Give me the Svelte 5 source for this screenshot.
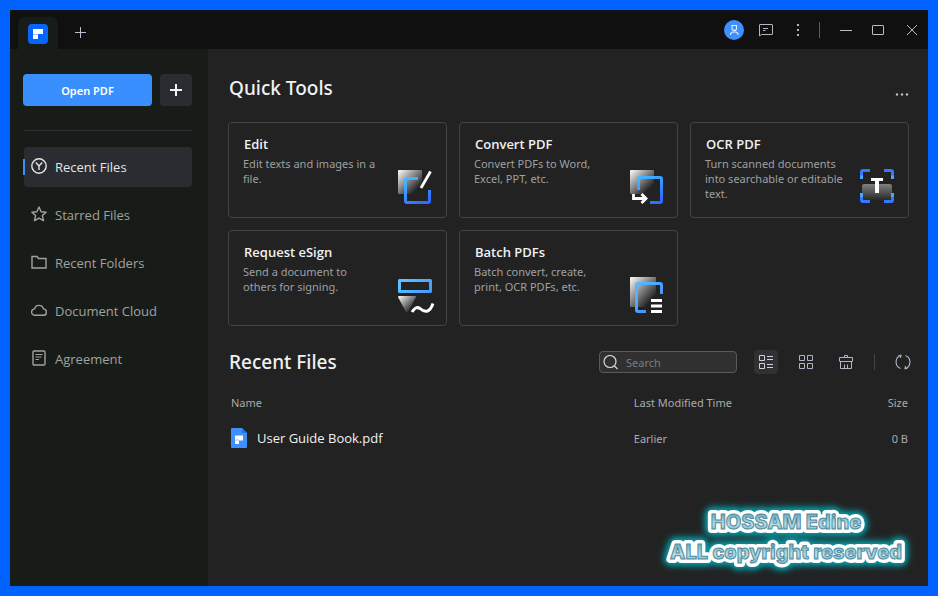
<script>
  let search = $state('');
  let activeNav = $state('Recent Files');
  let view = $state('list');

  const navItems = [
    { label: 'Recent Files', icon: 'clock' },
    { label: 'Starred Files', icon: 'star' },
    { label: 'Recent Folders', icon: 'folder' },
    { label: 'Document Cloud', icon: 'cloud' },
    { label: 'Agreement', icon: 'doc' }
  ];

  const tools = [
    { id: 'edit', title: 'Edit', text: 'Edit texts and images in a file.' },
    { id: 'convert', title: 'Convert PDF', text: 'Convert PDFs to Word, Excel, PPT, etc.' },
    { id: 'ocr', title: 'OCR PDF', text: 'Turn scanned documents into searchable or editable text.' },
    { id: 'sign', title: 'Request eSign', text: 'Send a document to others for signing.' },
    { id: 'batch', title: 'Batch PDFs', text: 'Batch convert, create, print, OCR PDFs, etc.' }
  ];

  const files = [{ name: 'User Guide Book.pdf', modified: 'Earlier', size: '0 B' }];

  let shownFiles = $derived(
    files.filter((f) => f.name.toLowerCase().includes(search.toLowerCase()))
  );
</script>

<div class="window">
  <!-- shared gradients -->
  <svg class="defs" width="0" height="0" aria-hidden="true">
    <defs>
      <linearGradient id="fade" x1="0" y1="0" x2="1" y2="1">
        <stop offset="0" stop-color="#fff" />
        <stop offset="0.8" stop-color="#222" />
      </linearGradient>
      <linearGradient id="fadeDown" x1="0" y1="0" x2="0" y2="1">
        <stop offset="0" stop-color="#808080" />
        <stop offset="1" stop-color="#222" />
      </linearGradient>
      <linearGradient id="blue" gradientUnits="userSpaceOnUse" x1="8" y1="6" x2="24" y2="36">
        <stop offset="0.1" stop-color="#43bdff" />
        <stop offset="1" stop-color="#2f6bff" />
      </linearGradient>
      <linearGradient id="sky" gradientUnits="userSpaceOnUse" x1="0" y1="2" x2="36" y2="38">
        <stop offset="0" stop-color="#5fcaff" />
        <stop offset="0.7" stop-color="#4596ff" />
      </linearGradient>
    </defs>
  </svg>

  <header class="titlebar">
    <button class="tab" aria-label="Home">
      <svg width="20" height="20" viewBox="0 0 20 20">
        <rect width="20" height="20" rx="4" fill="#0864ff" />
        <path d="M5 5h10v5h-5v5H5z" fill="#fff" />
        <path d="M5 10h5v1H5z" fill="#9cc3ff" />
      </svg>
    </button>
    <button class="new-tab" aria-label="New tab">
      <svg width="12" height="12" viewBox="0 0 12 12"><path d="M0 6.500h11M5.500 1v11" stroke="#b6bfcc" /></svg>
    </button>

    <div class="window-controls">
      <button aria-label="Account">
        <svg width="20" height="20" viewBox="0 0 20 20">
          <circle cx="10" cy="10" r="10" fill="#3e8fff" />
          <g fill="none" stroke="#e6f0ff" stroke-width="1.100">
            <path d="M8 5.500h4.500v3q0 2-2.200 2T8 8.500zM6.500 15v-1.500l2-1.500h3.500l2 1.500V15" />
          </g>
        </svg>
      </button>
      <button aria-label="Messages">
        <svg width="16" height="14" viewBox="0 0 16 14" fill="none" stroke="#aeb7c4">
          <path d="M1.500 13V2q0-.5.5-.5h12q.5 0 .5.5v9q0 .5-.5.5H3.500L1.500 13M5 5.500h5M5 7.500h2.500" />
        </svg>
      </button>
      <button aria-label="More options">
        <svg width="2" height="12" viewBox="0 0 2 12" fill="#aeb7c4"><path d="M0 0h2v2H0zM0 5h2v2H0zM0 10h2v2H0z" /></svg>
      </button>
      <span class="divider"></span>
      <button aria-label="Minimize">
        <svg width="12" height="12" viewBox="0 0 12 12"><path d="M0 6.500h12" stroke="#b6bfcc" /></svg>
      </button>
      <button aria-label="Maximize">
        <svg width="12" height="10" viewBox="0 0 12 10"><rect x="0.5" y="0.5" width="11" height="9" rx="0.5" fill="none" stroke="#b6bfcc" /></svg>
      </button>
      <button class="close" aria-label="Close">
        <svg width="10" height="10" viewBox="0 0 10 10"><path d="M0 0l10 10M10 0L0 10" stroke="#b6bfcc" /></svg>
      </button>
    </div>
  </header>

  <div class="body">
    <aside class="sidebar">
      <div class="open-row">
        <button class="open-btn">Open PDF</button>
        <button class="create-btn" aria-label="Create PDF">
          <svg width="12" height="12" viewBox="0 0 12 12"><path d="M0 6h12M6 0v12" stroke="#f0f2f5" stroke-width="2" /></svg>
        </button>
      </div>

      <nav>
        {#each navItems as item}
          <button
            class="nav-item"
            class:active={activeNav === item.label}
            onclick={() => (activeNav = item.label)}
          >
            <svg width="16" height="18" viewBox="0 0 16 18" fill="none" stroke="currentColor" stroke-width="1.400">
              {#if item.icon === 'clock'}
                <circle cx="8" cy="8" r="7.200" />
                <path d="M4.800 4.500L8 8l3.200-3.500M8 8v4" />
              {:else if item.icon === 'star'}
                <path d="M8 1l2.100 4.700 5 .5-3.700 3.400 1.100 5L8 12.100l-4.500 2.500 1.100-5L.9 6.200l5-.5z" stroke-linejoin="round" />
              {:else if item.icon === 'folder'}
                <path d="M1 2.500h5l1.500 2H15V14H1z" />
              {:else if item.icon === 'cloud'}
                <path d="M4 13.300a3.200 3.200 0 0 1-.4-6.400 4.500 4.500 0 0 1 8.800 0 3.200 3.200 0 0 1-.4 6.400z" />
              {:else}
                <rect x="2" y="1" width="12" height="14" rx="1" />
                <path d="M4.500 4.500h7M4.500 7h6M4.500 9.500h3.500" stroke-width="1" />
              {/if}
            </svg>
            {item.label}
          </button>
        {/each}
      </nav>
    </aside>

    <main>
      <section>
        <div class="section-head">
          <h2>Quick Tools</h2>
          <button class="more" aria-label="More tools">
            <svg width="14" height="3" viewBox="0 0 14 3" fill="#b6bfcc">
              <circle cx="2" cy="1.500" r="1.200" /><circle cx="7" cy="1.500" r="1.200" /><circle cx="12" cy="1.500" r="1.200" />
            </svg>
          </button>
        </div>

        <div class="cards">
          {#each tools as tool}
            <button class="card">
              <span class="card-text">
                <span class="card-title">{tool.title}</span>
                <span class="card-desc">{tool.text}</span>
              </span>
              <svg width="38" height="38" viewBox="0 0 38 38" fill="none">
                {#if tool.id === 'edit'}
                  <rect x="1" y="2" width="24" height="24" rx="1" fill="url(#fade)" />
                  <path d="M21 10.500H10q-1.500 0-1.500 1.500v21q0 1.500 1.500 1.500h21q1.500 0 1.500-1.500V22" stroke="url(#blue)" stroke-width="3" />
                  <path d="M33.500 3.500L24 20" stroke="#fff" stroke-width="2.800" />
                {:else if tool.id === 'convert'}
                  <rect x="2" y="2" width="24" height="24" rx="1" fill="url(#fade)" />
                  <path d="M10.500 22V11q0-1.500 1.500-1.500h20q1.500 0 1.500 1.500v22q0 1.500-1.500 1.500H22" stroke="url(#blue)" stroke-width="3" />
                  <path d="M5.500 26v4.500H17M13.500 26l4.500 4.500-4.500 4.500" stroke="#fff" stroke-width="2.800" />
                {:else if tool.id === 'ocr'}
                  <rect x="3" y="16" width="30" height="17" rx="2" fill="url(#fadeDown)" />
                  <path d="M2.500 11V4q0-1.500 1.500-1.500h7M25 2.500h7q1.500 0 1.500 1.500v7M33.500 25v7q0 1.500-1.500 1.500h-7M11 33.500H4q-1.500 0-1.500-1.500v-7" stroke="#3478ff" stroke-width="3" />
                  <path d="M2.500 7.500V11M33.500 7.500V11M2.500 25v4M33.500 25v4" stroke="#4aa5ff" stroke-width="3" />
                  <path d="M12 11.500h12" stroke="#fff" stroke-width="3" />
                  <path d="M18 12v13" stroke="#fff" stroke-width="4" />
                {:else if tool.id === 'sign'}
                  <rect x="2.500" y="4.500" width="31" height="11" stroke="url(#sky)" stroke-width="3" stroke-linejoin="round" />
                  <path d="M2 20h16q1.500 0 .8 1.400L11 36q-1 1.500-2 0L1.200 21.500Q.5 20 2 20z" fill="url(#fade)" />
                  <path d="M15 36c2.500-4 5-5.500 8-3.500 4.500 4 9.500 5 13-5" stroke="#fff" stroke-width="3" />
                {:else}
                  <rect x="2" y="1" width="26" height="30" rx="1" fill="url(#fade)" />
                  <path d="M33.500 18V9q0-1.500-1.500-1.500H10Q8.500 7.500 8.500 9v25q0 1.500 1.500 1.500h8" stroke="url(#sky)" stroke-width="3" />
                  <path d="M23 24.500h11M23 30h11M23 35.500h11" stroke="#fff" stroke-width="3" />
                {/if}
              </svg>
            </button>
          {/each}
        </div>
      </section>

      <section class="recent">
        <div class="section-head">
          <h2>Recent Files</h2>
          <div class="toolbar">
            <label class="search">
              <svg width="16" height="16" viewBox="0 0 16 16" fill="none" stroke="#d5d9e0" stroke-width="1.200">
                <circle cx="7" cy="7.500" r="6" /><path d="M11.500 12L14.500 15" />
              </svg>
              <input type="text" placeholder="Search" aria-label="Search" bind:value={search} />
            </label>
            <button class="tool" class:on={view === 'list'} aria-label="List view" onclick={() => (view = 'list')}>
              <svg width="14" height="14" viewBox="0 0 14 14" fill="none" stroke="#c9d1e3">
                <path d="M.5.5h5v5h-5zM.5 8.500h5v5h-5zM8 1.500h6M8 4.500h6M8 9.500h6M8 12.500h6" />
              </svg>
            </button>
            <button class="tool" class:on={view === 'grid'} aria-label="Grid view" onclick={() => (view = 'grid')}>
              <svg width="14" height="14" viewBox="0 0 14 14" fill="none" stroke="#aeb7c8">
                <path d="M.5.5h5v5h-5zM8.500.5h5v5h-5zM.5 8.500h5v5h-5zM8.500 8.500h5v5h-5z" />
              </svg>
            </button>
            <button class="tool" aria-label="Clear list">
              <svg width="14" height="14" viewBox="0 0 14 14" fill="none" stroke="#aeb7c8">
                <path d="M5.500 2.500v-2h3v2M.5 6V2.500h13V6M.5 6.500h13M1.500 6.500v7h11v-7M5.500 13.500v-4M8.500 13.500v-4" />
              </svg>
            </button>
            <span class="divider"></span>
            <button class="tool refresh" aria-label="Refresh">
              <svg width="16" height="16" viewBox="0 0 16 16" fill="none" stroke="#aeb7c8" stroke-width="1.100">
                <path d="M6 1.300A7 7 0 0 0 5.500 14.500M10 14.700A7 7 0 0 0 10.500 1.500M3.500 1.500L6 1.300l-.5 2.500M12.500 14.500l-2.500.2.5-2.500" />
              </svg>
            </button>
          </div>
        </div>

        <table>
          <thead>
            <tr>
              <th class="name">Name</th>
              <th class="modified">Last Modified Time</th>
              <th class="size">Size</th>
            </tr>
          </thead>
          <tbody>
            {#each shownFiles as file}
              <tr>
                <td class="name">
                  <a href="#file">
                    <svg width="16" height="20" viewBox="0 0 16 20">
                      <path d="M1 0h10l5 5v14q0 1-1 1H1q-1 0-1-1V1q0-1 1-1z" fill="#3e8fff" />
                      <path d="M11 0l5 5h-5z" fill="#2b6fe0" />
                      <path d="M4 7.500h8v5H8V16H4z" fill="#fff" />
                      <path d="M4 11.500h4v1H4z" fill="#9cc3ff" />
                    </svg>
                    {file.name}
                  </a>
                </td>
                <td class="modified">{file.modified}</td>
                <td class="size">{file.size}</td>
              </tr>
            {/each}
          </tbody>
        </table>
      </section>
    </main>
  </div>

  <svg class="watermark" width="268" height="86" viewBox="0 0 268 86">
    <defs>
      <linearGradient id="ice" x1="0" y1="0" x2="0" y2="1">
        <stop offset="0.2" stop-color="#76aebb" />
        <stop offset="0.6" stop-color="#b9dfe7" />
        <stop offset="0.8" stop-color="#8fc0cc" />
      </linearGradient>
    </defs>
    <g class="halo">
      <text x="133" y="37">HOSSAM Edine</text>
      <text x="133" y="67">ALL copyright reserved</text>
    </g>
    <g class="face">
      <text x="133" y="37">HOSSAM Edine</text>
      <text x="133" y="67">ALL copyright reserved</text>
    </g>
  </svg>
</div>

<style>
  :global(body) {
    background: #0063ff;
  }

  .window {
    position: relative;
    box-sizing: border-box;
    min-height: 100vh;
    display: flex;
    flex-direction: column;
    border: 10px solid #0063ff;
    background: #222;
    color: #f0f1f3;
    font-family: 'Segoe UI', 'Noto Sans', 'Open Sans', sans-serif;
    font-size: 11px;
  }

  .defs {
    position: absolute;
  }

  button {
    display: flex;
    align-items: center;
    justify-content: center;
    padding: 0;
    border: none;
    background: transparent;
    color: inherit;
    font: inherit;
    cursor: pointer;
  }

  svg {
    flex: none;
    display: block;
  }

  .divider {
    width: 1px;
    height: 16px;
    background: #5a5c60;
  }

  .titlebar {
    height: 39px;
    display: flex;
    align-items: flex-end;
    padding-left: 8px;
    background: #101010;
  }

  .tab {
    width: 40px;
    height: 32px;
    padding-top: 2px;
    border-radius: 7px 7px 0 0;
    background: #181c18;
  }

  .new-tab {
    width: 46px;
    height: 34px;
  }

  .window-controls {
    align-self: flex-start;
    display: flex;
    align-items: center;
    height: 40px;
    margin-left: auto;
  }

  .window-controls button {
    width: 32px;
    height: 32px;
  }

  .window-controls .divider {
    margin: 0 10px 0 5px;
  }

  .window-controls .close {
    width: 34px;
    padding-left: 2px;
  }

  .body {
    flex: 1;
    display: flex;
  }

  .sidebar {
    box-sizing: border-box;
    width: 198px;
    flex: none;
    padding: 25px 16px 0 13px;
    background: #181c18;
  }

  .open-row {
    display: flex;
    gap: 8px;
    padding-bottom: 24px;
    border-bottom: 1px solid #2a2d32;
  }

  .open-btn {
    flex: 1;
    height: 32px;
    border-radius: 4px;
    background: #3a8fff;
    color: #fff;
    font-weight: 600;
  }

  .create-btn {
    width: 32px;
    height: 32px;
    border-radius: 4px;
    background: #2a2c31;
  }

  nav {
    display: flex;
    flex-direction: column;
    gap: 8px;
    margin-top: 16px;
  }

  .nav-item {
    position: relative;
    justify-content: flex-start;
    gap: 8px;
    height: 40px;
    margin-left: 1px;
    padding-left: 7px;
    border-radius: 4px;
    color: #a0a29f;
    font-family: 'Segoe UI', 'Open Sans', sans-serif;
    font-size: 13px;
  }

  .nav-item.active {
    background: #2a2c31;
    color: #e4e6e3;
  }

  .nav-item.active::before {
    content: '';
    position: absolute;
    left: -1px;
    top: 12px;
    width: 2px;
    height: 16px;
    background: #3a8fff;
  }

  main {
    flex: 1;
    min-width: 0;
    padding: 23px 19px 20px 20px;
  }

  .section-head {
    display: flex;
    align-items: center;
    justify-content: space-between;
    height: 32px;
  }

  h2 {
    margin: 0 0 0 1px;
    font-size: 19px;
    line-height: 32px;
    font-weight: 500;
  }

  .more {
    height: 20px;
    align-self: flex-end;
  }

  .cards {
    display: grid;
    grid-template-columns: repeat(3, 1fr);
    gap: 12px;
    margin-top: 18px;
  }

  .card {
    align-items: flex-end;
    justify-content: space-between;
    gap: 15px;
    box-sizing: border-box;
    min-height: 96px;
    padding: 12px 11px 11px 14px;
    border: 1px solid #444;
    border-radius: 4px;
    text-align: left;
  }

  .card:hover {
    border-color: #3a8fff;
  }

  .card-text {
    align-self: flex-start;
    display: flex;
    flex-direction: column;
    gap: 3px;
  }

  .card-title {
    padding-left: 1px;
    font-family: 'Segoe UI', 'Open Sans', sans-serif;
    font-size: 13px;
    line-height: 18px;
    font-weight: 600;
  }

  .card-desc {
    color: #9da0a3;
    line-height: 15px;
  }

  .recent {
    margin-top: 20px;
  }

  .toolbar {
    display: flex;
    align-items: center;
    gap: 16px;
  }

  .search {
    display: flex;
    align-items: center;
    gap: 7px;
    box-sizing: border-box;
    width: 138px;
    height: 22px;
    margin-right: 1px;
    padding: 0 3px;
    border: 1px solid #5a5a5a;
    border-radius: 4px;
    background: #303030;
  }

  .search input {
    flex: 1;
    min-width: 0;
    padding: 0;
    border: none;
    outline: none;
    background: transparent;
    color: #f0f1f3;
    font: inherit;
  }

  .search input::placeholder {
    color: #7d7d7d;
  }

  .tool {
    width: 24px;
    height: 24px;
    border-radius: 4px;
  }

  .tool.on {
    background: #313131;
  }

  .toolbar .divider {
    background: #444;
  }

  .refresh {
    margin-right: -6px;
  }

  table {
    width: 100%;
    margin-top: 6px;
    border-collapse: collapse;
    table-layout: fixed;
  }

  th,
  td {
    height: 36px;
    padding: 0;
    color: #a9abae;
    font-weight: 400;
    text-align: left;
  }

  .name {
    width: 59%;
    padding-left: 3px;
  }

  .name a {
    display: flex;
    align-items: center;
    gap: 10px;
    color: #f0f1f3;
    font-family: 'Segoe UI', 'Open Sans', sans-serif;
    font-size: 13px;
    text-decoration: none;
  }

  .modified {
    padding-left: 1px;
  }

  .size {
    padding-right: 1px;
    text-align: right;
  }

  .watermark {
    position: absolute;
    right: 7px;
    bottom: 8px;
    font-family: Inter, 'Open Sans', sans-serif;
    font-size: 20px;
    font-weight: 800;
    text-anchor: middle;
    pointer-events: none;
  }

  .halo text {
    fill: #fff;
    stroke: #fff;
    stroke-width: 8px;
    stroke-linejoin: round;
  }

  .halo {
    filter: drop-shadow(0 0 2px #0b929c) drop-shadow(0 0 3px #0b929c) drop-shadow(0 0 3px #0b929c);
  }

  .face text {
    fill: url(#ice);
    stroke: #4f8c9f;
    stroke-width: 1px;
  }
</style>
